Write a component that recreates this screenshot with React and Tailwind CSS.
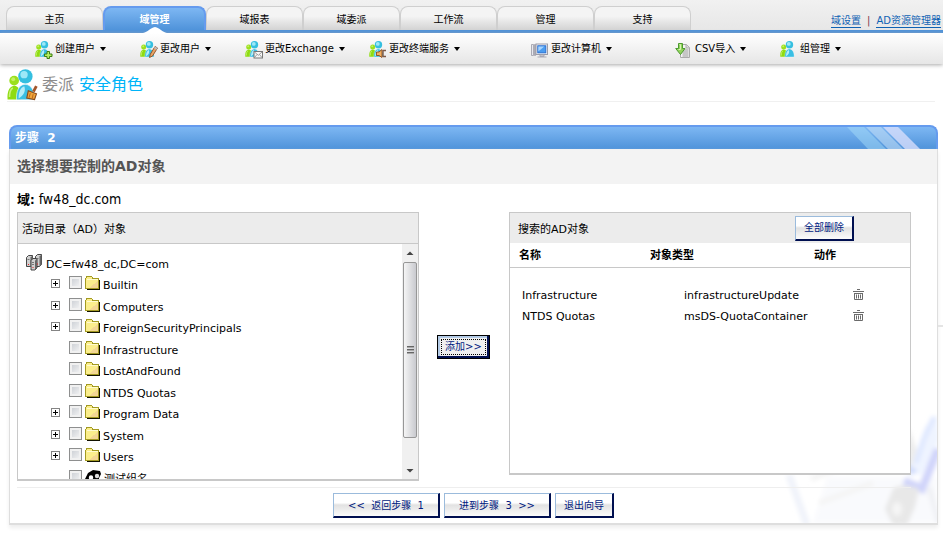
import React from 'react';

const tabs = ['主页', '域管理', '域报表', '域委派', '工作流', '管理', '支持'];

const menuItems = [
    { label: '创建用户', icon: 'add', width: 'w-[105px]' },
    { label: '更改用户', icon: 'edit', width: 'w-[105px]' },
    { label: '更改Exchange', icon: 'mail', width: 'w-[124px]' },
    { label: '更改终端服务', icon: 'terminal', width: 'w-[162px]' },
    { label: '更改计算机', icon: 'computer', width: 'w-[144px]' },
    { label: 'CSV导入', icon: 'csv', width: 'w-[105px]' },
    { label: '组管理', icon: 'group', width: 'w-[80px]' },
];

const treeNodes = [
    { name: 'Builtin', expandable: true },
    { name: 'Computers', expandable: true },
    { name: 'ForeignSecurityPrincipals', expandable: true },
    { name: 'Infrastructure' },
    { name: 'LostAndFound' },
    { name: 'NTDS Quotas' },
    { name: 'Program Data', expandable: true },
    { name: 'System', expandable: true },
    { name: 'Users', expandable: true },
    { name: '测试组名', group: true },
];

const selectedObjects = [
    { name: 'Infrastructure', type: 'infrastructureUpdate' },
    { name: 'NTDS Quotas', type: 'msDS-QuotaContainer' },
];

// Green + blue people, shared by the menu icons and the page title
const People = () => (
    <g>
        <circle cx="3.7" cy="6" r="2.500" fill="#9be01d" />
        <circle cx="3.2" cy="5.300" r="1" fill="#c3f062" />
        <path d="M0.300 15.700C0 12 .9 8.900 3.700 8.600c2.300.1 3.600 2.200 3.400 7.100z" fill="#8fdc12" />
        <path d="M1.300 14.500c0-2.500.4-4 1.700-4.700" stroke="#c9f27a" strokeWidth="0.800" fill="none" />
        <circle cx="9.5" cy="3.800" r="3.700" fill="#35bfe0" />
        <circle cx="8.8" cy="2.900" r="1.900" fill="#9de8f7" />
        <path d="M4.900 15.900C4.700 11.500 6 8.100 9.300 7.900c3.300.1 5 3.500 4.800 8z" fill="#3bbfe4" stroke="#fff" strokeWidth="0.300" />
        <path d="M6 15.200c0-3.300.9-5.600 2.900-6.300 1 2.200-.3 4.900-2.900 6.300z" fill="#b5edf9" />
    </g>
);

const MenuIcon = ({ type }) => {
    if (type === 'computer') {
        return (
            <svg className="h-[18px] w-[18px] shrink-0" viewBox="0 0 18 18">
                <path d="M0.500 3.500h2v11h-2zM3.500 3.500h1v11h-1z" fill="#e8e8ee" stroke="#9a9aa6" strokeWidth="0.800" />
                <rect x="5" y="3" width="11.500" height="10.500" fill="#f2f2f6" stroke="#9c9ca8" />
                <rect x="6.800" y="4.800" width="8" height="7" fill="#4a9cf0" stroke="#2a6fd0" />
                <path d="M7.300 5.500h6l-6 5z" fill="#a5d4ff" />
                <path d="M9 14h4v1.500h-4zM6.500 16h9" stroke="#a9a9b5" fill="#ddd" />
            </svg>
        );
    }
    if (type === 'csv') {
        return (
            <svg className="h-[18px] w-[18px] shrink-0" viewBox="0 0 18 18">
                <path d="M5.500 3.500h6l3 3v10h-9z" fill="#f4f4f4" stroke="#aaa" />
                <path d="M11 3.500v3.500h3.500" fill="#ddd" stroke="#aaa" />
                <path d="M7.500 9h6M7.500 11h6M7.500 13h6M7.500 15h6" stroke="#999" />
                <path d="M3.500 2.500h4v5h2.500L5.500 13.500 0.700 7.500h2.800z" fill="#92d35c" stroke="#4c9a30" />
                <path d="M4.500 3.500h1v5h-2" stroke="#d8f5b8" fill="none" />
            </svg>
        );
    }
    return (
        <svg className="h-[18px] w-[18px] shrink-0" viewBox="0 0 18 18">
            <People />
            {type === 'add' && (
                <path d="M12 10.500h2.500v2.500h2.500v2.500h-2.500v2h-2.500v-2H9.500v-2.500h2.500z" fill="#b6ef62" stroke="#3d7d12" />
            )}
            {type === 'edit' && (
                <g>
                    <path d="M9.500 16.500l.8-3.300L15 5.500l2.500 1.500-5 8z" fill="#e8a465" stroke="#8a4d24" strokeWidth="0.900" />
                    <path d="M15 5.500l2.500 1.500-1 1.700-2.500-1.500z" fill="#b9bcc4" />
                </g>
            )}
            {type === 'mail' && (
                <g>
                    <rect x="9" y="10.500" width="8.500" height="6.500" fill="#f7f7f7" stroke="#777" />
                    <path d="M9.500 11l3.800 3.300L17 11M9.500 16.500l2.500-3M17 16.500l-2.500-3" stroke="#888" strokeWidth="0.800" fill="none" />
                </g>
            )}
            {type === 'terminal' && (
                <g>
                    <path d="M7.500 11h2.500l3-2.500v8L10 14.500H7.500z" fill="#f2b061" stroke="#8a4b1c" strokeWidth="0.900" />
                    <path d="M14 9.500h3M14 15.500h3M14 9v7" stroke="#7d5a48" strokeWidth="1.400" />
                </g>
            )}
        </svg>
    );
};

const FolderIcon = () => (
    <svg className="h-[14px] w-[15px] shrink-0" viewBox="0 0 15 14" shapeRendering="crispEdges">
        <path d="M1.500 13.500h13v-10" stroke="#111100" fill="none" />
        <path d="M0.500 12.500v-10l1.500-2h4.500l1.500 2h5.500v10z" fill="#fbee8c" stroke="#a39a22" />
        <path d="M1.500 3.500h11.500" stroke="#fffbd0" />
        <path d="M12.500 5v7h-8z" fill="#f3d794" />
    </svg>
);

const GroupIcon = () => (
    <svg className="h-[14px] w-[16px] shrink-0" viewBox="0 0 16 14">
        <path d="M0 9l3-6 5-3 7 1 1 3-2 4v6H1z" fill="#000" />
        <circle cx="6" cy="7.500" r="2.200" fill="#fff" />
        <circle cx="12" cy="6" r="2.200" fill="#ddd" />
        <path d="M4 13l2-3 2 3zM10 12l2-3 2 3z" fill="#3c3c9c" />
    </svg>
);

const ServersIcon = () => (
    <svg className="h-[17px] w-[17px] shrink-0" viewBox="0 0 17 17">
        {[['M0.500 3.500l2-2h4v9l-2 2h-4z', 'M4.500 3.500v9l2-2v-9z'], ['M9.500 2.500l2-2h4v10l-2 2h-4z', 'M13.500 2.500v10l2-2v-10z'], ['M5 6.500l2-2h4v9.500l-2 2h-4z', 'M9 6.500v9.500l2-2v-9.500z']].map(([body, side]) => (
            <g key={body}>
                <path d={body} fill="#d0d0d0" stroke="#333" strokeWidth="0.900" />
                <path d={side} fill="#666" />
            </g>
        ))}
        <path d="M1.500 5.500h2M10.500 4.500h2M6 8.500h2M6 10.500h2" stroke="#777" />
        <path d="M2 10.500h1M11 10h1M6.500 13.500h1" stroke="#e22" />
    </svg>
);

const TrashIcon = () => (
    <svg className="block h-[12px] w-[11px]" viewBox="0 0 11 12" fill="none" stroke="#6b6b6b">
        <path d="M4 0.500h3M0 2.500h11" />
        <path d="M1.500 4v6.500h8V4M1 4.500h9M3.500 5.500v4M5.500 5.500v4M7.500 5.500v4" />
    </svg>
);

const WizardButton = ({ children, className = '' }) => (
    <button
        type="button"
        className={`h-[25px] border-t border-l border-r-2 border-b-2 border-t-[#9bbbdc] border-l-[#9bbbdc] border-r-[#000f50] border-b-[#000f50] bg-linear-to-b from-white from-40% via-[#e2e2e2] via-50% to-[#fbfbfb] text-[10px] whitespace-pre text-[#001a80] ${className}`}
    >
        {children}
    </button>
);

const Header = () => (
    <header>
        <div className="flex h-[33px] items-end justify-between border-b-3 border-[#4f93da] bg-linear-to-b from-[#f1f1f1] to-[#e7e7e7] pl-[6px]">
            <nav className="flex">
                {tabs.map((tab) =>
                    tab === '域管理' ? (
                        <a key={tab} href="#" className="relative flex h-6 w-[103px] items-center justify-center rounded-t-lg border-2 border-b-0 border-[#659bee] bg-linear-to-b from-[#7db7f3] to-[#4f93da] text-[10px] font-bold text-white">
                            {tab}
                            <svg className="absolute -bottom-[3px] left-1/2 h-[6px] w-6 -translate-x-1/2" viewBox="0 0 24 6">
                                <path d="M0 6C5 5 7 1 12 0c5 1 7 5 12 6z" fill="#fff" />
                            </svg>
                        </a>
                    ) : (
                        <a key={tab} href="#" className="flex h-6 w-[97px] items-center justify-center rounded-t-lg border border-b-0 border-[#cfcfcf] bg-linear-to-b from-[#f4f4f4] from-40% to-[#d3d3d3] pt-[2px] text-[10px] text-black">
                            {tab}
                        </a>
                    )
                )}
            </nav>
            <div className="flex gap-[6px] pr-[2px] pb-[2px] text-[10px] text-[#0f62b4]">
                <a href="#" className="border-b border-[#0f62b4] leading-[13px]">域设置</a>
                <span className="leading-[13px] text-[#7a3a4a]">|</span>
                <a href="#" className="border-b border-[#0f62b4] leading-[13px]">AD资源管理器</a>
            </div>
        </div>
        <nav className="flex h-[31px] items-center bg-linear-to-b from-white to-[#e6e6e6] pl-[35px] shadow-[0_1px_4px_#a8a8a8]">
            {menuItems.map((item) => (
                <button key={item.label} type="button" className={`flex shrink-0 items-center gap-[2px] pt-[2px] text-left text-[10px] whitespace-nowrap text-black ${item.width}`}>
                    <MenuIcon type={item.icon} />
                    <span className="pb-[2px]">{item.label}</span>
                    <svg className="mb-[2px] ml-[3px] h-[4px] w-[6px] shrink-0" viewBox="0 0 6 4">
                        <path d="M0 0h6L3 4z" fill="#000" />
                    </svg>
                </button>
            ))}
        </nav>
    </header>
);

const DirectoryTree = () => (
    <section className="border border-b-2 border-[#c8c8c8] bg-white">
        <h3 className="flex h-[31px] items-center border-b border-[#c8c8c8] bg-[#ececec] pt-[5px] pl-[4px] text-[11px]">活动目录（AD）对象</h3>
        <div className="flex h-[235px]">
            <div className="flex-1 overflow-hidden pt-[10px] pl-[8px] text-[11px]">
                <div className="flex h-[22px] gap-[3px]">
                    <ServersIcon />
                    <span className="pt-[4px] leading-[14px]">DC=fw48_dc,DC=com</span>
                </div>
                <ul className="pl-[25px]">
                    {treeNodes.map((node) => (
                        <li key={node.name} className="flex items-start odd:h-[22px] even:h-[21px]">
                            <span className="w-[18px] shrink-0 pt-[3px]">
                                {node.expandable && (
                                    <button type="button" aria-label={`+ ${node.name}`} className="block">
                                        <svg className="block h-[9px] w-[9px]" viewBox="0 0 9 9">
                                            <rect x="0.500" y="0.500" width="8" height="8" fill="#fff" stroke="#848484" />
                                            <path d="M2 4.500h5M4.500 2v5" stroke="#000" />
                                        </svg>
                                    </button>
                                )}
                            </span>
                            <label className="flex items-start">
                                <input type="checkbox" className="mr-[3px] h-[13px] w-[13px] shrink-0 appearance-none border border-[#8e8f8f] bg-linear-to-br from-[#c6cad0] to-[#f8f8f8] shadow-[inset_0_0_0_2px_#f1f1f1]" />
                                {node.group ? <GroupIcon /> : <FolderIcon />}
                                <span className="pt-[3px] pl-[3px] leading-[14px] whitespace-nowrap">{node.name}</span>
                            </label>
                        </li>
                    ))}
                </ul>
            </div>
            <div className="flex w-4 flex-col items-center bg-[#f0f0f0]">
                <svg className="h-[18px] w-[8px]" viewBox="0 0 8 18">
                    <path d="M0.500 11L4 7.500 7.500 11z" fill="#444" />
                </svg>
                <div className="flex h-[176px] w-[14px] items-center justify-center rounded-xs border border-[#979797] bg-linear-to-r from-[#f5f5f5] to-[#c9cacf]">
                    <svg className="h-[8px] w-[7px]" viewBox="0 0 7 8">
                        <path d="M0 0.500h7M0 3.500h7M0 6.500h7" stroke="#666" />
                        <path d="M0 1.500h7M0 4.500h7M0 7.500h7" stroke="#aaa" />
                    </svg>
                </div>
                <svg className="mt-auto h-[17px] w-[8px]" viewBox="0 0 8 17">
                    <path d="M0.500 7h7L4 10.500z" fill="#444" />
                </svg>
            </div>
        </div>
    </section>
);

const SelectedObjects = () => (
    <section className="min-h-[263px] self-start border border-b-2 border-[#c8c8c8] bg-white">
        <div className="flex h-[30px] items-center justify-between bg-[#ececec] pr-[56px] pl-[8px]">
            <h3 className="pt-[5px] text-[11px]">搜索的AD对象</h3>
            <WizardButton className="w-[59px]">全部删除</WizardButton>
        </div>
        <table className="w-full table-fixed border-separate border-spacing-0 text-left text-[11px]">
            <thead>
                <tr className="h-[25px]">
                    <th className="w-[35%] border-b border-[#c8c8c8] pt-[2px] pl-[9px]">名称</th>
                    <th className="w-[41%] border-b border-[#c8c8c8] pt-[2px]">对象类型</th>
                    <th className="border-b border-[#c8c8c8] pt-[2px]">动作</th>
                </tr>
            </thead>
            <tbody className="before:block before:h-[18px]">
                {selectedObjects.map((obj) => (
                    <tr key={obj.name} className="h-[21px]">
                        <td className="pl-[12px]">{obj.name}</td>
                        <td className="pl-[34px]">{obj.type}</td>
                        <td className="pb-[3px] pl-[39px]">
                            <button type="button" aria-label={`删除 ${obj.name}`} className="block">
                                <TrashIcon />
                            </button>
                        </td>
                    </tr>
                ))}
            </tbody>
        </table>
    </section>
);

// Faint pen and paper behind the lower right corner of the wizard
const PenWatermark = () => (
    <svg className="absolute right-0 bottom-0 h-[120px] w-[160px]" viewBox="0 0 160 120">
        <defs>
            <filter id="soft"><feGaussianBlur stdDeviation="2" /></filter>
        </defs>
        <g filter="url(#soft)">
            <path d="M50 74h110v46H36z" fill="#f9fafd" />
            <path d="M12 72l18 50" stroke="#f0f3fa" strokeWidth="7" />
            <path d="M42 100l54-20M34 76l30-12" stroke="#f5f5f5" strokeWidth="6" />
            <path d="M132 24l10 30-6 16-6-6z" fill="#ededed" />
            <path d="M160 12l-12 12-10 28-6 20 10 4 14-24 6-16z" fill="#eff4ff" />
            <path d="M157 14l-10 22-8 24" stroke="#dfe8ff" strokeWidth="5" fill="none" />
            <path d="M161 46l-8 20-8 20-18-8" stroke="#d0d4fa" strokeWidth="8" fill="none" />
            <path d="M130 64l8 6" stroke="#d3ddfc" strokeWidth="7" />
            <ellipse cx="139" cy="74" rx="5" ry="3" fill="#fff" />
            <path d="M116 86c6-5 16-4 26 0l-4 18-8 18h-14l-8-16z" fill="#e8e8e8" />
            <ellipse cx="120" cy="106" rx="5" ry="7" fill="#f5f5f5" />
            <path d="M152 84l10 36" stroke="#f0f1f5" strokeWidth="6" />
        </g>
    </svg>
);

const App = () => {
    return (
        <div className="min-h-screen bg-white font-['DejaVu_Sans','Noto_Sans_CJK_SC',sans-serif] text-black">
            <Header />
            <div className="mr-2 ml-[7px] flex h-[38px] items-center gap-1 border-b border-[#f0f0f0] pt-[4px]">
                <svg className="h-[32px] w-[31px]" viewBox="0 0 16 16.500">
                    <People />
                    <path d="M14.500 8.500l1.300.7-1.500 2.800-1.300-.7z" fill="#a3552a" />
                    <path d="M11 11.200l4.200 1.600-1 3-4-.8z" fill="#f0a53a" stroke="#8a4b1c" strokeWidth="0.600" />
                    <path d="M12 12.500l-.6 2.300M13.500 13l-.5 2.300" stroke="#b6651e" strokeWidth="0.500" />
                </svg>
                <h1 className="text-[16px] text-[#8c8c8c]">
                    委派 <span className="text-[#00b4f8]">安全角色</span>
                </h1>
            </div>

            <main className="mt-[23px] mr-[5px] ml-[9px]">
                <div className="flex h-6 items-center justify-between overflow-hidden rounded-t-lg border-2 border-b-0 border-[#659bee] bg-linear-to-b from-[#7db7f3] to-[#4f93da] pl-[4px] text-white">
                    <h2 className="text-[12px] font-bold whitespace-pre">步骤  2</h2>
                    <svg className="mr-[15px] h-[22px] w-[74px]" viewBox="0 0 74 22">
                        <path d="M0 0h17l22 22H21z" fill="#a5dcf8" opacity="0.500" />
                        <path d="M19 0h15l22 22H41z" fill="#c8e2f8" opacity="0.550" />
                        <path d="M36 0h15l22 22H58z" fill="#dfe2fc" opacity="0.750" />
                    </svg>
                </div>
                <div className="relative border-x border-b-2 border-[#dedede] shadow-[0_3px_4px_#eeeeee]">
                    <PenWatermark />
                    <div className="absolute top-[176px] -right-[6px] h-[2px] w-[5px] bg-[#e4e4e4]"></div>
                    <h2 className="flex h-[35px] items-center bg-[#f3f3f3] pl-[7px] text-[14px] font-bold text-[#555]">选择想要控制的AD对象</h2>
                    <div className="relative pr-[26px] pl-[7px]">
                        <p className="flex h-7 items-center pt-[3px] font-['DejaVu_Sans_Condensed','DejaVu_Sans','Noto_Sans_CJK_SC',sans-serif] text-[14px]">
                            <b className="mr-1 text-[13px]">域:</b>fw48_dc.com
                        </p>
                        <div className="grid grid-cols-[1fr_90px_1fr]">
                            <DirectoryTree />
                            <div className="flex items-center justify-center pr-px">
                                <button type="button" className="h-[24px] w-[53px] border border-black bg-[#000f50] pr-[2px] pb-[2px] text-[10px] text-[#001a80]">
                                    <span className="flex h-full items-center border-t-2 border-l-2 border-[#b4cbe6] bg-[#f0f0f0] p-px">
                                        <span className="flex h-full flex-1 items-center justify-center border border-dotted border-black">添加&gt;&gt;</span>
                                    </span>
                                </button>
                            </div>
                            <SelectedObjects />
                        </div>
                        <div className="mt-[6px] border-t border-[#eeeeee]"></div>
                    </div>
                    <div className="relative flex justify-center gap-1 pt-[5px] pb-[5px]">
                        <WizardButton className="w-[107px]">{'<<  返回步骤  1'}</WizardButton>
                        <WizardButton className="w-[107px]">{'进到步骤  3  >>'}</WizardButton>
                        <WizardButton className="w-[59px]">退出向导</WizardButton>
                    </div>
                </div>
            </main>
        </div>
    );
};

export default App;
